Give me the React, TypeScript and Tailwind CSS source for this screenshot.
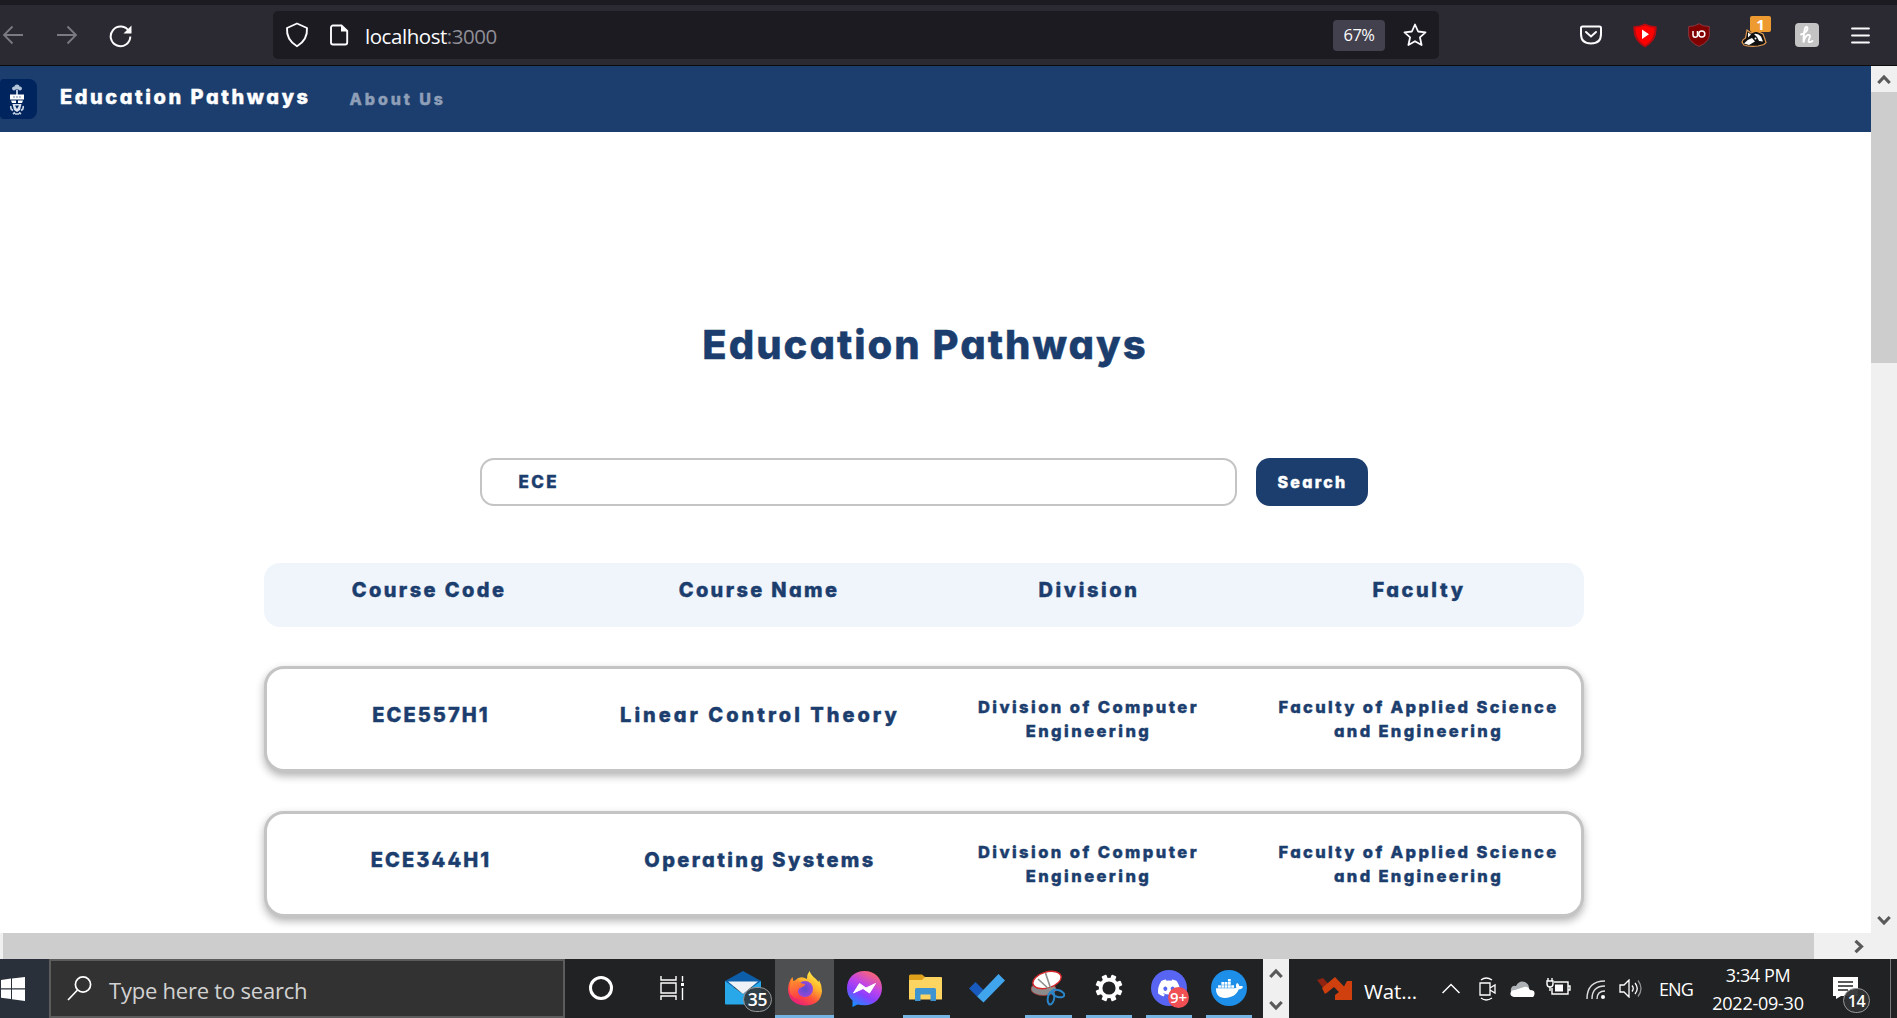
import React from "react";
import { FaDiscord, FaDocker } from "react-icons/fa";

const display = "font-['Inter',sans-serif] font-extrabold [font-feature-settings:'cv11','ss01'] [-webkit-text-stroke:0.4px_currentColor] whitespace-nowrap";
const ui = "font-['Open_Sans','Noto_Sans',sans-serif]";

function BrowserBar() {
  return (
    <header className="h-[66px] shrink-0 bg-[#2b2a33] border-t-[5px] border-t-[#1c1b22] border-b border-b-[#0c0c0d] flex items-center overflow-hidden">
      <div className="flex w-[273px] shrink-0 items-center text-[#7b7a82]">
        <svg className="ml-[2px] w-[22px] h-[20px]" viewBox="0 0 22 20" fill="none" stroke="currentColor" strokeWidth="1.8"><path d="M21 10H2M10.500 1.500L2 10l8.500 8.500" /></svg>
        <svg className="ml-[32px] w-[22px] h-[20px]" viewBox="0 0 22 20" fill="none" stroke="currentColor" strokeWidth="1.800"><path d="M1 10h19M11.500 1.500L20 10l-8.500 8.500" /></svg>
        <svg className="ml-[31px] mt-[2px] w-[24px] h-[24px]" viewBox="0 0 24 24" fill="none" stroke="#fbfbfe" strokeWidth="2"><path d="M20 7.500A9.800 9.800 0 1 0 21.300 12.500" /><path d="M22.500 1.500v8h-8z" fill="#fbfbfe" stroke="none" /></svg>
      </div>
      <div className="flex h-[48px] w-[1166px] shrink-0 items-center rounded-[5px] bg-[#1c1b22] text-[#fbfbfe]">
        <svg className="ml-[12px] w-[24px] h-[26px]" viewBox="0 0 24 26" fill="none" stroke="currentColor" strokeWidth="1.900" strokeLinejoin="round"><path d="M12 1.500L22 6q.8 12-10 18.200Q1.200 18 2 6z" /></svg>
        <svg className="ml-[20px] w-[20px] h-[24px]" viewBox="0 0 20 24" fill="none" stroke="currentColor" strokeWidth="1.900"><path d="M4 2.500h8.500L18.200 8v11.500a2 2 0 0 1-2 2H4a2 2 0 0 1-2-2v-15a2 2 0 0 1 2-2z" /><path d="M12 2v6.500h6.500z" fill="currentColor" stroke="none" /></svg>
        <div className={`${ui} ml-[16px] mt-[2px] text-[20.5px] tracking-[-0.450px]`}>localhost<span className="text-[#8f8e96]">:3000</span></div>
        <div className={`${ui} ml-auto flex h-[31px] w-[52px] items-center justify-center rounded-[4px] bg-[#42414d] pt-px text-[16.5px] tracking-[-0.500px]`}>67%</div>
        <svg className="ml-[18px] mr-[12px] w-[24px] h-[24px]" viewBox="0 0 24 24" fill="none" stroke="currentColor" strokeWidth="1.800" strokeLinejoin="round"><path d="M12 1.500l3.100 7 7.400.8-5.600 5 1.700 7.700-6.600-3.800L5.400 22l1.700-7.700-5.600-5 7.400-.8z" /></svg>
      </div>
      <div className="ml-[141px] flex items-center">
        <svg className="w-[22px] h-[20px]" viewBox="0 0 22 20" fill="none" stroke="#fbfbfe" strokeWidth="2" strokeLinecap="round"><path d="M2.500 1.500h17q1.500 0 1.500 1.500v6q0 9.500-10 9.500T1 9V3q0-1.500 1.500-1.500z" /><path d="M6 7l5 4.500L16 7" /></svg>
        <svg className="ml-[31px] w-[24px] h-[25px]" viewBox="0 0 24 25"><path d="M12 0.500Q17 3 23.500 3.200 25 17 12 24.500-1 17 .5 3.200 7 3 12 .5z" fill="#b70b10" /><path d="M12 2.500q4.500 2 9.500 2.300Q22 16 12 22.500 2 16 2.500 4.800 7.500 4.500 12 2.500z" fill="#ff0000" /><path d="M9 6.500l7 4.700-7 4.700z" fill="#fff" /></svg>
        <svg className="ml-[31px] w-[22px] h-[24px]" viewBox="0 0 22 24"><path d="M11 .7Q15 3.500 21.300 3.500v9.500Q20 19.500 11 23.300 2 19.500.7 13V3.500Q7 3.500 11 .7z" fill="#800000" stroke="#9d3c45" strokeWidth=".8" /><path d="M5 8v4q0 2.200 2.200 2.200T9.500 12.500V8M9.500 8v4.500" fill="none" stroke="#fff" strokeWidth="1.500" /><circle cx="13.800" cy="11" r="3" fill="none" stroke="#fff" strokeWidth="1.500" /></svg>
        <div className="relative ml-[31px] h-[24px] w-[26px]">
          <svg className="h-[24px] w-[26px]" viewBox="0 0 26 24"><path d="M1 19Q1.500 16.500 4.500 15L6 7l4 3 5-2 7 3 2 5.500 1 3-2 2-6 1.500Q8 24 3 22z" fill="#111" stroke="#dd9a52" strokeWidth="1.200" /><path d="M3 20.500q3-4 8-5.500l3 3.500-6 3.500zM7 9.500l3 2-3 3zM13 11q4-1 7 2.500l2 5-4-.5-2-4z" fill="#fff" /><circle cx="14.500" cy="15.500" r="1" fill="#fff" /></svg>
          <div className="absolute left-[9px] top-[-7px] flex h-[16px] w-[21px] items-center justify-center rounded-[2px] bg-[#ed9a30] font-['Open_Sans',sans-serif] text-[15px] font-bold text-white">1</div>
        </div>
        <div className="ml-[28px] flex h-[24px] w-[24px] items-center justify-center rounded-[4px] bg-[#c3c3c3]">
          <svg className="h-[20px] w-[16px]" viewBox="0 0 16 20" fill="none" stroke="#fff" strokeWidth="1.900" strokeLinecap="round"><path d="M2 9.500Q8.500 7 8.500 3.500 8 .8 6.500 2.500 4.500 6 4.500 17.500 6 10.500 9 10t1.500 3-.5 4 3.500-1" /></svg>
        </div>
        <svg className="ml-[32px] h-[17px] w-[19px]" viewBox="0 0 19 17" stroke="#fbfbfe" strokeWidth="1.800" strokeLinecap="round"><path d="M1 1.500h17M1 8.500h17M1 15.500h17" /></svg>
      </div>
    </header>
  );
}

function Chevron({ rotate = "" }: { rotate?: string }) {
  return (
    <svg className={`h-[11px] w-[14px] ${rotate}`} viewBox="0 0 14 11" fill="none" stroke="#5a5a5a" strokeWidth="3.200"><path d="M1.300 9L7 3l5.700 6" /></svg>
  );
}

function Crest() {
  return (
    <div className="flex h-[40px] w-[37px] items-center rounded-r-[8px] rounded-l-[4px] bg-[#00245d] pl-[9px]">
      <svg className="h-[31px] w-[16px]" viewBox="0 0 16 31">
        <g fill="#b4c4da"><circle cx="8" cy="3" r="2.600" /><circle cx="5" cy="4.500" r="1.900" /><circle cx="11" cy="4.500" r="1.900" /><path d="M7 6h2v5H7z" /></g>
        <path d="M1 10.500h14v5H1zM2 16.500h5v2.500H3zM9 16.500h5l-1 2.500H9z" fill="#fff" />
        <path d="M3.500 20h9l-1.500 6-3 2-3-2z" fill="#dbe4f0" />
        <path d="M6 21.500h4l-2 3.500z" fill="#00245d" />
        <path d="M2 22q-1 3 2 4.500M14 22q1 3-2 4.500M4 30l2-1.500M12 30l-2-1.500M6 30h4" fill="none" stroke="#c3d0e2" strokeWidth="1.700" />
        <path d="M4 13h8" stroke="#6d84a8" strokeWidth="1" strokeDasharray="2 1" />
      </svg>
    </div>
  );
}

type Cell = { text: string; track: string };
const courses: { code: Cell; name: Cell }[] = [
  { code: { text: "ECE557H1", track: "tracking-[2.050px]" }, name: { text: "Linear Control Theory", track: "tracking-[3px]" } },
  { code: { text: "ECE344H1", track: "tracking-[2.100px]" }, name: { text: "Operating Systems", track: "tracking-[2.400px]" } },
];
const headings: Cell[] = [
  { text: "Course Code", track: "tracking-[2.400px]" },
  { text: "Course Name", track: "tracking-[2.350px]" },
  { text: "Division", track: "tracking-[2.600px]" },
  { text: "Faculty", track: "tracking-[2.600px]" },
];

function CourseCard({ code, name }: { code: Cell; name: Cell }) {
  return (
    <div className="h-[106px] shrink-0 rounded-[20px] border-[3px] border-[#c4c4c4] bg-white shadow-[0_4px_8px_rgba(0,0,0,0.3)]">
      <div className="-mx-[3px] grid grid-cols-4 text-center">
        <div className={`${display} pl-[5px] pt-[31px] text-[20px] leading-[30px] ${code.track}`}>{code.text}</div>
        <div className={`${display} pl-[3px] pt-[31px] text-[20px] leading-[30px] ${name.track}`}>{name.text}</div>
        <div className={`${display} pt-[26px] text-[16.500px] leading-6 tracking-[2.450px]`}>Division of Computer<br />Engineering</div>
        <div className={`${display} pt-[26px] text-[16.500px] leading-6 tracking-[2.350px]`}>Faculty of Applied Science<br />and Engineering</div>
      </div>
    </div>
  );
}

function Page() {
  return (
    <div className="flex h-[867px] min-w-0 flex-1 flex-col overflow-hidden bg-white text-[#1c3e6e]">
      <nav className="flex h-[66px] shrink-0 items-center bg-[#1c3e6e] text-white">
        <Crest />
        <div className={`${display} ml-[23px] mb-[4px] text-[20px] tracking-[2.550px]`}>Education Pathways</div>
        <div className={`${display} ml-[39px] text-[16px] tracking-[2.900px] text-[#8e9fb7]`}>About Us</div>
      </nav>
      <main className="mx-auto flex w-[1320px] translate-x-[-12px] flex-col">
        <h1 className={`${display} mt-[183px] pl-[3px] text-center text-[40px] leading-[60px] tracking-[2px]`}>Education Pathways</h1>
        <div className="mt-[83px] flex h-[48px] justify-center gap-[19px]">
          <div className={`${display} flex w-[757px] items-center rounded-[14px] border-2 border-[#c4c4c4] pl-[37px] pt-px text-[17px] tracking-[2.400px]`}>ECE</div>
          <button className={`${display} w-[112px] rounded-[14px] bg-[#1c3e6e] pl-[2px] text-[16px] tracking-[2.300px] text-white`}>Search</button>
        </div>
        <div className="mt-[57px] grid h-[64px] shrink-0 grid-cols-4 rounded-[16px] bg-[#f0f5fc] text-center">
          {headings.map((h) => (
            <div key={h.text} className={`${display} pl-px pt-[12px] text-[20px] leading-[30px] ${h.track}`}>{h.text}</div>
          ))}
        </div>
        <div className="mt-[39px] flex flex-col gap-[39px]">
          {courses.map((c) => <CourseCard key={c.code.text} {...c} />)}
        </div>
      </main>
    </div>
  );
}

function MailIcon() {
  return (
    <svg className="h-[36px] w-[37px]" viewBox="0 0 37 36"><path d="M0 11L18 1l18 10v6H0z" fill="#0d5ea9" /><path d="M0 11l18 13 18-13v22.500a1 1 0 0 1-1 1H1a1 1 0 0 1-1-1z" fill="#28a8e8" /><path d="M3 11.500h30L18 24z" fill="#eef1f5" /></svg>
  );
}

function FirefoxIcon() {
  return (
    <svg className="h-[36px] w-[36px]" viewBox="0 0 36 36">
      <defs>
        <linearGradient id="fxBody" x1=".8" y1="0" x2=".2" y2="1"><stop offset="0" stopColor="#fff44f" /><stop offset=".35" stopColor="#ffb52b" /><stop offset=".65" stopColor="#ff4f3b" /><stop offset="1" stopColor="#e31587" /></linearGradient>
        <linearGradient id="fxFace" x1=".2" y1="0" x2=".4" y2="1"><stop offset="0" stopColor="#ff9a2a" /><stop offset="1" stopColor="#ff3c48" /></linearGradient>
        <radialGradient id="fxGlobe"><stop offset="0" stopColor="#5b4bd0" /><stop offset="1" stopColor="#9449d8" /></radialGradient>
      </defs>
      <path d="M22.500 1q1 3 4 6 3 2 5 5l.5-2q3 5 3 11Q34 35 18 35.500 2 34.500 1 20 1 12 5.500 7l.5 4 2-.5Q13 5 20 9q0-5 2.500-8z" fill="url(#fxBody)" />
      <circle cx="18" cy="19" r="8" fill="url(#fxGlobe)" />
      <path d="M5.500 8l1 3.500 3-.5q3 0 4.500 2 2 .8 4 1 0 2-4 3.500-2 0-3 3-1 6 6 7.500-8 3-13.500-4Q1 16 5.500 8z" fill="url(#fxFace)" />
    </svg>
  );
}

function MessengerIcon() {
  return (
    <svg className="h-[37px] w-[37px]" viewBox="0 0 37 37">
      <defs><linearGradient id="msg" x1=".75" y1="0" x2=".25" y2="1"><stop offset="0" stopColor="#ff6968" /><stop offset=".4" stopColor="#c044e8" /><stop offset=".65" stopColor="#8a3fff" /><stop offset="1" stopColor="#1292ff" /></linearGradient></defs>
      <path d="M18.500 1C8.500 1 1 8 1 18q0 8 5.500 12.500V37l5-2.500q3 .8 7 .8C28.500 35.300 36 28 36 18S28.500 1 18.500 1z" fill="url(#msg)" />
      <path d="M7.500 23l6-9.500 6.500 4.500 9.500-4.500-6 9.500-6.500-4.500z" fill="#fff" stroke="#fff" strokeLinejoin="round" />
    </svg>
  );
}

function FolderIcon() {
  return (
    <svg className="h-[28px] w-[33px]" viewBox="0 0 33 28"><path d="M0 2q0-1.500 1.500-1.500H13L16 3v6H0z" fill="#e0a21b" /><path d="M0 6h13l3-3h16q1 0 1 1v21.500H0z" fill="#fcd462" /><path d="M6 27V15.500q0-1.500 1.500-1.500h18q1.500 0 1.500 1.500V27h-5.500v-6.500h-10V27z" fill="#3d94d1" /></svg>
  );
}

function TodoIcon() {
  return (
    <svg className="h-[29px] w-[36px]" viewBox="0 0 36 29"><path d="M0 14.500L6.500 8l8 8-6.500 6.500z" fill="#185abd" /><path d="M8 22.500L29.500 0 36 6.500 14.500 28.500z" fill="#41a5ee" /></svg>
  );
}

function SnipIcon() {
  return (
    <svg className="h-[36px] w-[34px]" viewBox="0 0 34 36"><ellipse cx="12.500" cy="19" rx="12.500" ry="6.500" fill="#8c8c8c" stroke="#b03a3a" strokeWidth=".8" /><ellipse cx="16" cy="10" rx="14.500" ry="8" fill="#fff" stroke="#d6292c" strokeWidth="1.400" transform="rotate(-16 16 10)" /><path d="M14.500 3l6 18M7 9l13 12" stroke="#8e8e8e" strokeWidth="1.600" /><g fill="none" stroke="#2a86c8" strokeWidth="2"><ellipse cx="20" cy="28" rx="3.200" ry="6.500" transform="rotate(10 20 28)" /><ellipse cx="27" cy="23.500" rx="6.500" ry="3.400" transform="rotate(18 27 23.500)" /></g></svg>
  );
}

function GearIcon() {
  return (
    <svg className="h-[28px] w-[28px]" viewBox="-14 -14 28 28"><circle r="8.400" fill="none" stroke="#fff" strokeWidth="3.600" />{[0, 45, 90, 135, 180, 225, 270, 315].map((a) => <rect key={a} x="-2.600" y="-13.500" width="5.200" height="4.500" rx=".8" fill="#fff" transform={`rotate(${a + 22.5})`} />)}</svg>
  );
}

function TaskButton({ children, w, line, active }: { children: React.ReactNode; w: string; line?: string; active?: boolean }) {
  return (
    <div className={`relative flex h-full shrink-0 items-center justify-center pb-[1px] ${w} ${active ? "bg-[#4e4f51]" : ""}`}>
      {children}
      {line && <div className={`absolute bottom-0 h-[3px] bg-[#76b4e4] ${line}`} />}
    </div>
  );
}

function Taskbar() {
  return (
    <footer className={`${ui} flex h-[59px] shrink-0 overflow-hidden bg-[#212224] text-white`}>
      <div className="flex w-[49px] shrink-0 items-center bg-[#2a303a]">
        <svg className="ml-[1px] h-[24px] w-[24px]" viewBox="0 0 24 24" fill="#fff"><path d="M0 3l10-1.400v9.700H0zM11 1.500L24 0v11.300H11zM0 12.500h10V22L0 20.800zM11 12.500h13V24l-13-1.700z" /></svg>
      </div>
      <div className="flex w-[516px] shrink-0 items-center border-2 border-[#5c5c5c] bg-[#323232] text-[#d2d2d2]">
        <svg className="ml-[16px] h-[25px] w-[25px]" viewBox="0 0 25 25" fill="none" stroke="#fff" strokeWidth="1.700"><circle cx="16" cy="8.500" r="7.600" /><path d="M10.500 14L1 24" /></svg>
        <span className="ml-[17px] mt-[4px] text-[22px] tracking-[-0.220px]">Type here to search</span>
      </div>
      <TaskButton w="w-[72px]"><div className="h-[24px] w-[24px] rounded-full border-[3px] border-white" /></TaskButton>
      <TaskButton w="w-[72px]"><svg className="h-[24px] w-[26px]" viewBox="0 0 26 24" fill="none" stroke="#fff" strokeWidth="1.400"><path d="M1 0v4h15V0M1 7h15v10H1zM1 24v-4h15v4M22.500 0v5.500M22.500 12v12" /><path d="M21 7h3v3h-3z" fill="#fff" stroke="none" /></svg></TaskButton>
      <div className="relative flex w-[66px] shrink-0 items-center pb-[2px] pl-[16px]">
        <MailIcon />
        <div className="absolute left-[34px] top-[28px] flex h-[25px] w-[29px] items-center justify-center rounded-full border border-[#999] bg-[#30363a]/90 text-[17.5px] font-semibold tracking-[-0.300px]">35</div>
      </div>
      <TaskButton w="w-[59px]" line="inset-x-0" active><FirefoxIcon /></TaskButton>
      <TaskButton w="w-[61px]"><MessengerIcon /></TaskButton>
      <TaskButton w="w-[61px]" line="left-[8px] w-[47px]"><FolderIcon /></TaskButton>
      <TaskButton w="w-[62px]"><TodoIcon /></TaskButton>
      <TaskButton w="w-[60px]" line="left-[7px] w-[47px]"><SnipIcon /></TaskButton>
      <TaskButton w="w-[61px]" line="left-[8px] w-[46px]"><GearIcon /></TaskButton>
      <TaskButton w="w-[60px]" line="left-[7px] w-[46px]">
        <div className="flex h-[36px] w-[36px] items-center justify-center rounded-full bg-[#5865f2]"><FaDiscord className="h-[24px] w-[24px]" /></div>
        <div className="absolute left-[29px] top-[28px] flex h-[21px] w-[21px] items-center justify-center rounded-full bg-[#f04f54] text-[15px] font-semibold">9+</div>
      </TaskButton>
      <TaskButton w="w-[64px]" line="left-[7px] w-[46px]">
        <div className="mr-[4px] flex h-[36px] w-[36px] items-center justify-center rounded-full bg-[#1d8fe9]"><FaDocker className="h-[27px] w-[27px]" /></div>
      </TaskButton>
      <div className="flex w-[26px] shrink-0 flex-col items-center justify-between bg-[#f0f0f0] pb-[7px] pt-[9px]"><Chevron /><Chevron rotate="rotate-180" /></div>
      <svg className="ml-[28px] mt-[18px] h-[23px] w-[36px] shrink-0" viewBox="0 0 36 23"><path d="M0 3L6 1l9 10-5 5z" fill="#8f2412" /><path d="M5 11L18 0l9 9.500 3-5.500h5v19H18v-5l4-3-5-5-9 7z" fill="#d0400f" /></svg>
      <span className="ml-[11px] mt-[18px] w-[68px] text-[20.500px] leading-[28px] tracking-[-0.150px]">Wat...</span>
      <svg className="ml-[10px] mt-[24px] h-[11px] w-[18px] shrink-0" viewBox="0 0 18 11" fill="none" stroke="#fff" strokeWidth="1.500"><path d="M.5 10L9 1.500 17.500 10" /></svg>
      <svg className="ml-[19px] mt-[18px] h-[24px] w-[17px] shrink-0" viewBox="0 0 17 24" fill="none" stroke="#fff" strokeWidth="1.300"><path d="M1 6h10v12H1zM11 11l5-3v8l-5-3M2 3q5-4 11 0M2 21q5 4 11 0" /></svg>
      <svg className="ml-[14px] mt-[22px] h-[16px] w-[25px] shrink-0" viewBox="0 0 25 16"><path d="M4 14Q0 12 1 8t5-3q3-6 9-4 4 2 4 6z" fill="#aeb1b5" /><path d="M4 16q-4-1-3.500-4T5 9l9-3q4-1 6 3 5 0 4.500 4T21 16z" fill="#fff" /></svg>
      <svg className="ml-[11px] mt-[19px] h-[18px] w-[25px] shrink-0" viewBox="0 0 25 18" fill="none" stroke="#fff" strokeWidth="1.400"><path d="M8 4h14v12H6v-6M22 8h2v4h-2M2 0v3M6 0v3M1 3h6v3q0 3-3 3T1 6zM4 9v4" /><path d="M9 6.500h8v7H9z" fill="#fff" stroke="none" /></svg>
      <svg className="ml-[15px] mt-[20px] h-[21px] w-[20px] shrink-0" viewBox="0 0 20 21" fill="none" stroke="#fff" strokeWidth="1.400"><path d="M1 20Q1 2 19 2M6 20Q6 7 19 7M11 20q0-8 8-8" opacity=".85" /><circle cx="17" cy="18" r="2" fill="#fff" stroke="none" /></svg>
      <svg className="ml-[13px] mt-[20px] h-[19px] w-[23px] shrink-0" viewBox="0 0 23 19" fill="none" stroke="#fff" strokeWidth="1.300"><path d="M1 6h4l5-5v17l-5-5H1zM13 6.500q2.500 3 0 6M16 4q4.500 5.500 0 11" /><path d="M19 1.500q6 8 0 16" opacity=".5" /></svg>
      <span className="ml-[17px] mt-[17px] w-[34px] text-[18px] leading-[26px] tracking-[-0.900px]">ENG</span>
      <div className="ml-[14px] flex w-[102px] shrink-0 flex-col items-center pt-[2px] text-[18px] leading-[28px]"><span className="tracking-[-0.400px]">3:34 PM</span><span className="tracking-[-0.250px]">2022-09-30</span></div>
      <div className="relative ml-[24px] w-[40px] shrink-0">
        <svg className="mt-[18px] h-[22px] w-[25px]" viewBox="0 0 25 22"><path d="M0 0h25v19H8l-5 3v-3H0z" fill="#fff" /><path d="M5 5h15M5 9h15M5 13h10" stroke="#222" strokeWidth="1.400" /></svg>
        <div className="absolute left-[10px] top-[29px] flex h-[25px] w-[27px] items-center justify-center rounded-full border border-[#999] bg-[#303234]/95 text-[16px] font-semibold tracking-[-0.300px]">14</div>
      </div>
      <div className="ml-auto mr-[6px] w-px shrink-0 bg-[#77787a]" />
    </footer>
  );
}

export default function App() {
  return (
    <div className="flex h-[1018px] w-[1897px] flex-col overflow-hidden bg-white">
      <BrowserBar />
      <div className="flex h-[867px] shrink-0">
        <Page />
        <div className="flex w-[26px] shrink-0 flex-col items-center bg-[#f0f0f0]">
          <div className="flex h-[26px] items-center"><Chevron /></div>
          <div className="h-[271px] w-full bg-[#cdcdcd]" />
          <div className="mt-auto flex h-[26px] items-center"><Chevron rotate="rotate-180" /></div>
        </div>
      </div>
      <div className="flex h-[26px] shrink-0 items-center bg-[#f0f0f0] pl-[3px]">
        <div className="h-full w-[1811px] bg-[#cdcdcd]" />
        <div className="ml-[38px]"><Chevron rotate="rotate-90" /></div>
      </div>
      <Taskbar />
    </div>
  );
}
